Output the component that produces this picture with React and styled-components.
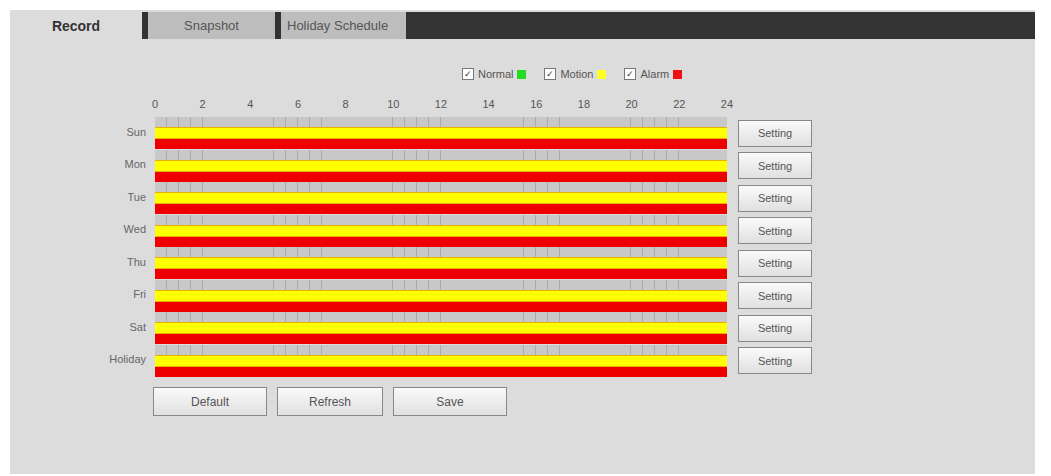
import React from 'react';
import styled, {createGlobalStyle} from 'styled-components';

const GlobalStyle = createGlobalStyle`
    body { margin: 0; background: #fff; font-family: Arial, "Liberation Sans", sans-serif; }
`;

const days = ['Sun', 'Mon', 'Tue', 'Wed', 'Thu', 'Fri', 'Sat', 'Holiday'];
const hours = [0, 2, 4, 6, 8, 10, 12, 14, 16, 18, 20, 22, 24];

export default function App() {
    return (
        <>
            <GlobalStyle />
            <Panel>
                <TabBar>
                    <Tab active>Record</Tab>
                    <Divider />
                    <Tab>Snapshot</Tab>
                    <Divider />
                    <Tab wide>Holiday Schedule</Tab>
                    <TabFill />
                </TabBar>
                <Legend>
                    <LegendItem><Check>✓</Check>Normal<Swatch color='#22dd22' /></LegendItem>
                    <LegendItem><Check>✓</Check>Motion<Swatch color='#ffff22' /></LegendItem>
                    <LegendItem><Check>✓</Check>Alarm<Swatch color='#ee1111' /></LegendItem>
                </Legend>
                <HourRow>
                    {hours.map(h => <Hour key={h} style={{left: `${h * 23.83}px`}}>{h}</Hour>)}
                </HourRow>
                <Schedule>
                    {days.map(d => (
                        <DayRow key={d}>
                            <DayLabel>{d}</DayLabel>
                            <Bars>
                                <TickBar />
                                <ColorBar color='#ffff00' />
                                <ColorBar color='#ee0000' />
                            </Bars>
                            <SettingButton>Setting</SettingButton>
                        </DayRow>
                    ))}
                </Schedule>
                <Actions>
                    <Button w={114}>Default</Button>
                    <Button w={106}>Refresh</Button>
                    <Button w={114}>Save</Button>
                </Actions>
            </Panel>
        </>
    );
}

const Panel = styled.div`
    margin: 10px 16px 2px 10px;
    height: 464px;
    background: #dcdcdc;
    color: #555;
`;

const TabBar = styled.div`
    display: flex;
    height: 27px;
    padding-top: 2px;
`;

const Tab = styled.div`
    width: ${p => p.active ? 132 : p.wide ? 125 : 127}px;
    display: flex;
    align-items: center;
    justify-content: ${p => p.wide ? 'flex-start' : 'center'};
    padding-left: ${p => p.wide ? 6 : 0}px;
    box-sizing: border-box;
    background: ${p => p.active ? '#dcdcdc' : '#bdbdbd'};
    font-size: ${p => p.active ? 14 : 13}px;
    font-weight: ${p => p.active ? 700 : 400};
    color: ${p => p.active ? '#333' : '#555'};
`;

const Divider = styled.div`
    width: 6px;
    background: #333;
`;

const TabFill = styled.div`
    flex: 1;
    background: #333;
`;

const Legend = styled.div`
    display: flex;
    height: 12px;
    gap: 18px;
    margin: 29px 0 0 452px;
    font-size: 11px;
    color: #555;
`;

const LegendItem = styled.div`
    display: flex;
    align-items: center;
    gap: 4px;
`;

const Check = styled.span`
    width: 10px;
    height: 10px;
    border: 1px solid #777;
    background: #fff;
    font-size: 9px;
    line-height: 10px;
    text-align: center;
    color: #333;
`;

const Swatch = styled.span`
    width: 9px;
    height: 9px;
    background: ${p => p.color};
`;

const HourRow = styled.div`
    position: relative;
    height: 19px;
    margin: 18px 0 0 145px;
`;

const Hour = styled.span`
    position: absolute;
    top: 0;
    transform: translateX(-50%);
    font-size: 11px;
    color: #555;
`;

const Schedule = styled.div`
    display: flex;
    flex-direction: column;
`;

const DayRow = styled.div`
    display: flex;
    align-items: center;
    height: 32.5px;
`;

const DayLabel = styled.div`
    width: 136px;
    text-align: right;
    font-size: 11px;
    color: #666;
    margin-top: -3px;
`;

const Bars = styled.div`
    width: 572px;
    margin-left: 9px;
    display: flex;
    flex-direction: column;
`;

const TickBar = styled.div`
    height: 10px;
    background:
        repeating-linear-gradient(90deg, transparent 0 11.4px, #aaa 11.4px 11.9px),
        #c8c8c8;
`;

const ColorBar = styled.div`
    height: 11px;
    background: ${p => p.color};
    border-top: 1px solid #e8b000;
    box-sizing: border-box;
`;

const Button = styled.div`
    width: ${p => p.w}px;
    height: 29px;
    box-sizing: border-box;
    border: 1px solid #888;
    background: linear-gradient(#fafafa, #e0e0e0);
    display: flex;
    align-items: center;
    justify-content: center;
    font-size: 12px;
    color: #555;
`;

const SettingButton = styled(Button)`
    width: 74px;
    height: 27px;
    margin-left: 11px;
    font-size: 11px;
`;

const Actions = styled.div`
    display: flex;
    gap: 10px;
    margin: 10px 0 0 143px;
`;
